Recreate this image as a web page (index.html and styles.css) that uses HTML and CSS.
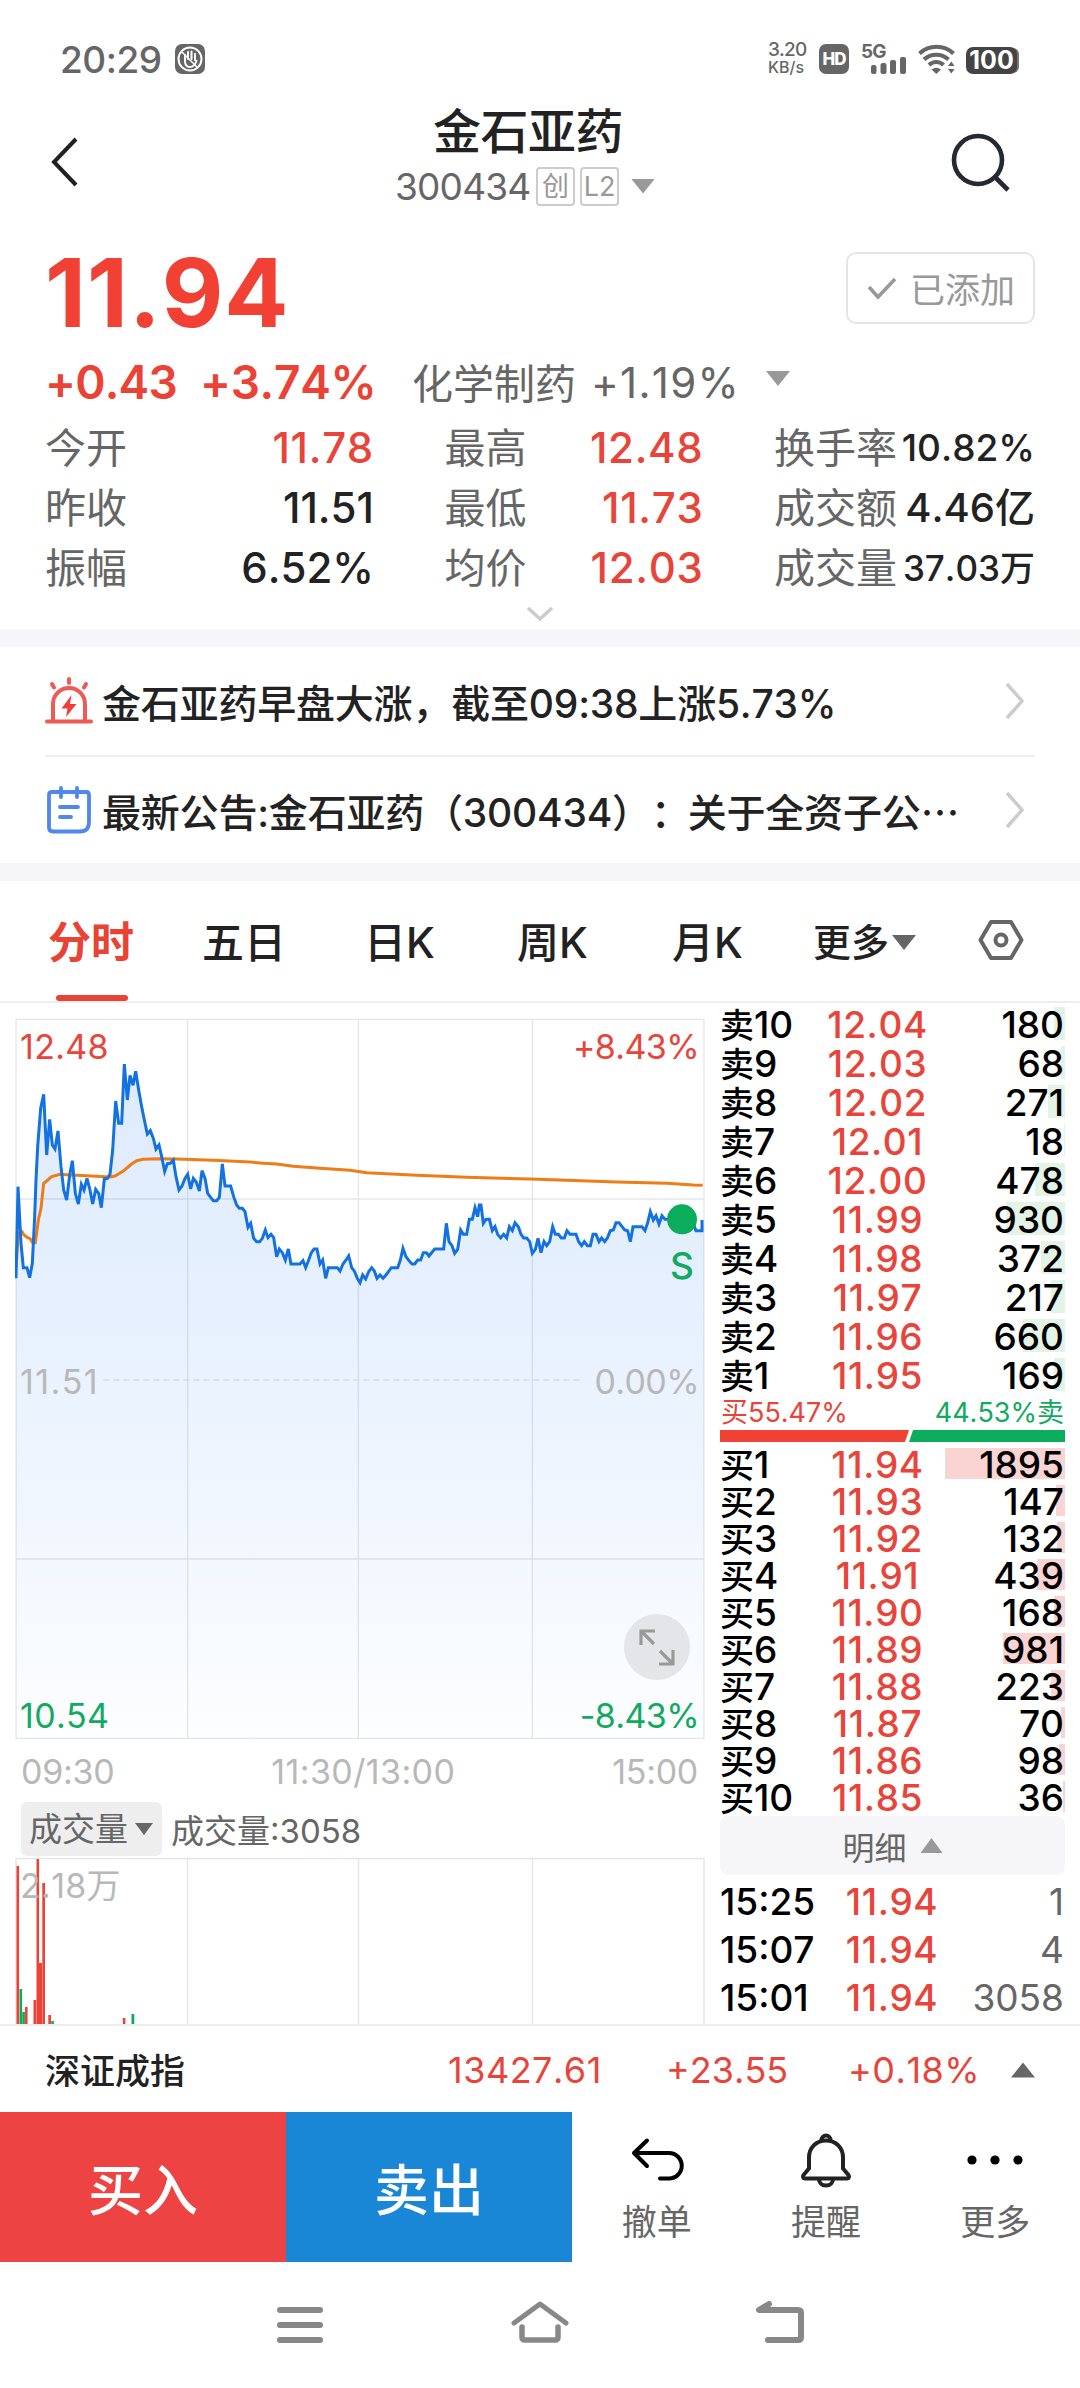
FILE: index.html
```html
<!DOCTYPE html>
<html lang="zh-CN">

<head>
    <meta charset="UTF-8">
    <meta name="viewport" content="width=device-width, initial-scale=1.0">
    <title>金石亚药 300434</title>
    <link rel="stylesheet" href="styles.css">
</head>

<body>
    <!-- 状态栏 -->
    <div class="status">
        <span class="time">20:29</span>
        <svg class="hand" width="32" height="30" viewBox="0 0 32 30">
            <rect x="1" width="30" height="30" rx="7" fill="#666" />
            <circle cx="16" cy="15" r="11.5" fill="none" stroke="#fff" stroke-width="2" />
            <path d="M11 18V11M14 15V8M17.500 15V7.500M21 16V10M11 17c0 4 2 6 5 6 3.500 0 5-2 6.500-6" fill="none" stroke="#fff" stroke-width="2" stroke-linecap="round" />
            <path d="M8 8l15 15" stroke="#fff" stroke-width="1.500" />
        </svg>
        <div class="speed"><span class="num">3.20</span><span class="unit">KB/s</span></div>
        <span class="hd">HD</span>
        <div class="signal">
            <span>5G</span>
            <svg width="46" height="30" viewBox="0 0 46 30">
                <g fill="#666">
                    <rect x="10" y="21" width="5.500" height="9" rx="2" />
                    <rect x="19.500" y="19" width="6" height="11" rx="2" />
                    <rect x="29" y="16" width="6" height="14" rx="2" />
                    <rect x="39" y="13" width="6" height="17" rx="2" />
                </g>
            </svg>
        </div>
        <svg class="wifi" width="38" height="30" viewBox="0 0 38 30">
            <g fill="none" stroke="#666" stroke-width="4">
                <path d="M1.500 9.500C11 .500 26 .500 35.500 9.500" />
                <path d="M6 15.500c7-6.500 17.500-6.500 24.500 0" />
                <path d="M11 21c4-4 10.500-4 14.500 0" />
            </g>
            <path d="M13.500 25.500q4.800-3.500 9.500 0L18.300 30zM30 22l3.300-4.500 3.300 4.500zM30 25l3.300 4.500 3.300-4.500z" fill="#666" />
        </svg>
        <span class="battery">100</span>
    </div>

    <!-- 标题 -->
    <div class="header">
        <svg class="back" width="30" height="52" viewBox="0 0 30 52">
            <path d="M26 3L4 26l22 23" fill="none" stroke="#222" stroke-width="4" />
        </svg>
        <div class="title">
            <h1>金石亚药</h1>
            <div class="code">
                <span class="code-num">300434</span>
                <span class="tag">创</span>
                <span class="tag">L2</span>
                <i class="down"></i>
            </div>
        </div>
        <svg class="search" width="62" height="62" viewBox="0 0 62 62">
            <circle cx="28" cy="28" r="24" fill="none" stroke="#262833" stroke-width="4.600" />
            <path d="M45 45l13 13" stroke="#262833" stroke-width="4.600" />
        </svg>
    </div>

    <!-- 报价 -->
    <div class="quote">
        <div class="price-row">
            <span class="price">11.94</span>
            <div class="added">
                <svg width="30" height="24" viewBox="0 0 30 24">
                    <path d="M2 11l9 10L28 3" fill="none" stroke="#999" stroke-width="3.600" />
                </svg>
                <span>已添加</span>
            </div>
        </div>
        <div class="change-row">
            <span class="chg">+0.43</span>
            <span class="pct">+3.74%</span>
            <span class="industry">化学制药</span>
            <span class="ind-pct">+1.19%</span>
            <i class="down"></i>
        </div>
        <div class="stats">
            <div><span>今开</span><b class="red">11.78</b></div>
            <div><span>最高</span><b class="red">12.48</b></div>
            <div><span>换手率</span><b class="small">10.82%</b></div>
            <div><span>昨收</span><b>11.51</b></div>
            <div><span>最低</span><b class="red">11.73</b></div>
            <div><span>成交额</span><b class="mid">4.46亿</b></div>
            <div><span>振幅</span><b>6.52%</b></div>
            <div><span>均价</span><b class="red">12.03</b></div>
            <div><span>成交量</span><b class="tiny">37.03万</b></div>
        </div>
        <div class="unfold">
            <svg width="28" height="16" viewBox="0 0 28 16">
                <path d="M2 2l12 11L26 2" fill="none" stroke="#ccc" stroke-width="3.500" />
            </svg>
        </div>
    </div>

    <!-- 资讯 -->
    <div class="news">
        <div class="news-item">
            <svg width="48" height="48" viewBox="0 0 48 48">
                <g fill="none" stroke="#f05a55" stroke-width="4" stroke-linecap="round">
                    <path d="M8 43V27a16 16 0 0 1 32 0v16M2 44.500h44M24 2v4M7 7l2 3.500M41 7l-2 3.500" />
                </g>
                <path d="M26.500 18L16.500 31.500h6L21 40l10.500-13h-6.500z" fill="#ee4038" />
            </svg>
            <p>金石亚药早盘大涨，截至09:38上涨5.73%</p>
            <svg class="arrow" width="20" height="38" viewBox="0 0 20 38">
                <path d="M2 2l15 17L2 36" fill="none" stroke="#ccc" stroke-width="3.500" />
            </svg>
        </div>
        <div class="news-item">
            <svg width="48" height="48" viewBox="0 0 48 48">
                <g fill="none" stroke="#4f87ec" stroke-width="3.800" stroke-linecap="round">
                    <path d="M7 6h34q3 0 3 3v27q0 9.500-9 9.500H8q-4 0-4-4V9q0-3 3-3zM16 2v9M32 2v9M15 21h18M15 31h11" stroke-linejoin="round" />
                </g>
            </svg>
            <p>最新公告:金石亚药（300434）<span class="colon">：</span>关于全资子公⋯</p>
            <svg class="arrow" width="20" height="38" viewBox="0 0 20 38">
                <path d="M2 2l15 17L2 36" fill="none" stroke="#ccc" stroke-width="3.500" />
            </svg>
        </div>
    </div>

    <!-- K线切换 -->
    <ul class="tabs">
        <li class="active">分时</li>
        <li>五日</li>
        <li>日K</li>
        <li>周K</li>
        <li>月K</li>
        <li class="more">更多<i class="down dark"></i></li>
        <li class="set">
            <svg width="46" height="42" viewBox="0 0 46 42">
                <path d="M13 3h20l10.500 18L33 39H13L2.500 21z" fill="none" stroke="#666" stroke-width="4" stroke-linejoin="round" />
                <circle cx="23" cy="21" r="5.500" fill="none" stroke="#666" stroke-width="4" />
            </svg>
        </li>
    </ul>

    <div class="main">
        <div class="left">
            <!-- 分时图 -->
            <div class="chart">
                <svg width="690" height="722" viewBox="45 54 2070 2166">
                    <defs>
                        <linearGradient id="area" gradientUnits="userSpaceOnUse" x1="0" y1="200" x2="0" y2="2214">
                            <stop offset="0" stop-color="#1472f6" stop-opacity=".14" />
                            <stop offset=".4" stop-color="#1472f6" stop-opacity=".1" />
                            <stop offset="1" stop-color="#1472f6" stop-opacity="0.01" />
                        </linearGradient>
                    </defs>
                    <path class="grid" d="M48 58H2112V2215H48zM563 58V2215M1075 58V2215M1597 58V2215M48 597H2112M48 1677H2112" />
                    <path class="zero" d="M310 1140H1740" />
                    <polygon fill="url(#area)" points="48,835 54,560 63,730 70,803 81,803 89,833 97,790 104,650 108,540 113,440 122,325 131,283 140,465 149,358 157,435 165,447 174,393 183,500 191,570 200,600 209,525 217,482 226,580 235,612 244,553 252,570 261,535 270,570 278,612 287,568 296,580 304,623 313,537 322,535 330,523 338,450 347,303 356,370 365,370 373,192 382,300 390,226 399,256 407,214 416,270 425,320 433,360 442,402 451,392 460,415 468,447 477,435 485,470 494,514 502,491 511,490 520,480 528,530 537,570 546,558 555,535 563,523 572,567 580,535 589,547 598,573 606,512 615,535 623,580 632,592 640,602 650,602 658,592 667,492 675,558 692,558 701,590 710,615 718,625 727,625 735,635 744,682 752,670 761,715 770,725 779,725 787,715 796,690 804,713 813,703 821,713 830,770 838,747 847,758 856,780 865,747 873,792 900,792 917,803 934,758 942,747 951,747 960,792 968,780 977,835 985,803 1012,803 1020,813 1029,792 1046,768 1055,803 1063,813 1072,835 1080,848 1115,803 1131,835 1174,803 1193,803 1209,745 1218,770 1236,792 1262,780 1270,758 1304,747 1331,747 1339,670 1347,725 1364,760 1373,748 1382,690 1400,703 1408,658 1425,623 1441,613 1450,670 1468,658 1477,692 1502,714 1520,714 1528,680 1545,668 1563,703 1580,714 1597,760 1614,715 1623,758 1649,725 1658,680 1666,703 1693,714 1701,692 1728,703 1745,737 1771,737 1779,703 1797,725 1814,725 1831,692 1848,668 1857,668 1883,692 1891,725 1899,680 1926,680 1935,692 1951,635 1968,655 1995,658 2046,660 2088,692 2106,692 2112,660 2112,2215 48,2215" />
                    <polyline class="avg" points="48,800 55,700 66,695 72,705 80,711 90,716 98,728 106,728 115,660 123,625 131,550 140,543 155,530 180,523 200,524 260,527 330,531 345,528 370,513 395,492 410,482 430,478 480,476 530,477 640,481 750,486 790,490 830,492 880,499 960,505 1050,511 1100,518 1250,526 1400,532 1590,537 1700,541 1850,546 2000,550 2080,555 2108,556" />
                    <polyline class="line" points="48,835 54,560 63,730 70,803 81,803 89,833 97,790 104,650 108,540 113,440 122,325 131,283 140,465 149,358 157,435 165,447 174,393 183,500 191,570 200,600 209,525 217,482 226,580 235,612 244,553 252,570 261,535 270,570 278,612 287,568 296,580 304,623 313,537 322,535 330,523 338,450 347,303 356,370 365,370 373,192 382,300 390,226 399,256 407,214 416,270 425,320 433,360 442,402 451,392 460,415 468,447 477,435 485,470 494,514 502,491 511,490 520,480 528,530 537,570 546,558 555,535 563,523 572,567 580,535 589,547 598,573 606,512 615,535 623,580 632,592 640,602 650,602 658,592 667,492 675,558 692,558 701,590 710,615 718,625 727,625 735,635 744,682 752,670 761,715 770,725 779,725 787,715 796,690 804,713 813,703 821,713 830,770 838,747 847,758 856,780 865,747 873,792 900,792 909,782 917,803 926,780 934,758 942,747 951,747 960,792 968,780 977,835 985,803 1012,803 1020,813 1029,792 1038,780 1046,768 1055,803 1063,813 1072,835 1080,848 1088,825 1097,837 1106,815 1115,803 1123,813 1131,835 1140,825 1149,835 1158,825 1174,803 1193,803 1201,780 1209,745 1218,770 1227,782 1236,792 1244,792 1253,780 1262,780 1270,758 1279,758 1287,768 1304,747 1331,747 1339,670 1347,725 1356,737 1364,760 1373,748 1382,690 1390,703 1400,703 1408,658 1417,658 1425,623 1433,650 1438,615 1443,615 1450,670 1458,658 1468,658 1477,692 1485,680 1493,703 1502,714 1511,703 1520,714 1528,680 1537,692 1545,668 1555,680 1563,703 1571,714 1580,714 1589,725 1597,760 1606,748 1614,715 1623,758 1632,725 1640,737 1649,725 1658,680 1666,703 1675,703 1684,714 1693,714 1701,692 1710,703 1728,703 1736,725 1745,737 1753,725 1762,737 1771,737 1779,703 1788,703 1797,725 1805,714 1814,725 1822,714 1831,692 1840,690 1848,668 1857,668 1874,690 1883,692 1891,725 1899,680 1926,680 1935,692 1943,668 1951,635 1960,660 1968,647 1977,672 1986,647 1995,658 2075,658 2088,692 2106,692 2106,660" />
                    <circle cx="2046" cy="658" r="45" fill="#0bac5c" />
                </svg>
                <span class="mark lt red">12.48</span>
                <span class="mark rt red">+8.43%</span>
                <span class="mark lm">11.51</span>
                <span class="mark rm">0.00%</span>
                <span class="mark lb green">10.54</span>
                <span class="mark rb green">-8.43%</span>
                <span class="sell-flag">S</span>
                <div class="full">
                    <svg width="66" height="66" viewBox="0 0 66 66">
                        <path d="M17 31V17h14M17 17l13 13M49 36v14H35M49 50L36 37" fill="none" stroke="#999" stroke-width="3.200" />
                    </svg>
                </div>
            </div>
            <div class="axis"><span>09:30</span><span class="noon">11:30/13:00</span><span>15:00</span></div>
            <!-- 成交量 -->
            <div class="vol-head">
                <div class="vol-select">成交量<i class="down dark sm"></i></div>
                <span>成交量:3058</span>
            </div>
            <div class="vol">
                <svg width="690" height="167" viewBox="15 1857 690 167">
                    <path class="vgrid" d="M16 2030V1858.500H704V2030M187.500 1858V2030M358.500 1858V2030M532.500 1858V2030" />
                    <g fill="#eb4337">
                        <rect x="16.500" y="1866" width="2.600" height="158" />
                        <rect x="25" y="2007" width="2.600" height="17" />
                        <rect x="33.500" y="2000" width="2.800" height="24" />
                        <rect x="36.500" y="1859" width="2.600" height="165" />
                        <rect x="39" y="1963" width="3" height="61" />
                        <rect x="42.300" y="1883" width="2.700" height="141" />
                        <rect x="48.300" y="2015" width="2.700" height="9" />
                        <rect x="122.800" y="2018" width="2.600" height="6" />
                    </g>
                    <g fill="#12a960">
                        <rect x="19.500" y="1989" width="2.600" height="35" />
                        <rect x="22.300" y="2012" width="2.600" height="12" />
                        <rect x="51.300" y="2021" width="2.600" height="3" />
                        <rect x="131.500" y="2014" width="2.800" height="10" />
                    </g>
                </svg>
                <span class="mark vt">2.18万</span>
            </div>
        </div>

        <!-- 十档盘口 -->
        <div class="book">
            <ul class="sell">
                <li><span><i>卖</i>10</span><b>12.04</b><em>180</em><u style="width: 11px"></u></li>
                <li><span><i>卖</i>9</span><b>12.03</b><em>68</em><u style="width: 4px"></u></li>
                <li><span><i>卖</i>8</span><b>12.02</b><em>271</em><u style="width: 17px"></u></li>
                <li><span><i>卖</i>7</span><b>12.01</b><em>18</em><u style="width: 1px"></u></li>
                <li><span><i>卖</i>6</span><b>12.00</b><em>478</em><u style="width: 30px"></u></li>
                <li><span><i>卖</i>5</span><b>11.99</b><em>930</em><u style="width: 59px"></u></li>
                <li><span><i>卖</i>4</span><b>11.98</b><em>372</em><u style="width: 24px"></u></li>
                <li><span><i>卖</i>3</span><b>11.97</b><em>217</em><u style="width: 14px"></u></li>
                <li><span><i>卖</i>2</span><b>11.96</b><em>660</em><u style="width: 42px"></u></li>
                <li><span><i>卖</i>1</span><b>11.95</b><em>169</em><u style="width: 11px"></u></li>
            </ul>
            <div class="ratio"><span class="red">买55.47%</span><span class="green">44.53%卖</span></div>
            <svg class="ratio-bar" width="345" height="12" viewBox="0 0 345 12">
                <path d="M0 0h189l-4 12H0z" fill="#f04134" />
                <path d="M193 0h152v12H189z" fill="#0bac5c" />
            </svg>
            <ul class="buy">
                <li><span><i>买</i>1</span><b>11.94</b><em>1895</em><u style="width: 120px"></u></li>
                <li><span><i>买</i>2</span><b>11.93</b><em>147</em><u style="width: 9px"></u></li>
                <li><span><i>买</i>3</span><b>11.92</b><em>132</em><u style="width: 8px"></u></li>
                <li><span><i>买</i>4</span><b>11.91</b><em>439</em><u style="width: 28px"></u></li>
                <li><span><i>买</i>5</span><b>11.90</b><em>168</em><u style="width: 11px"></u></li>
                <li><span><i>买</i>6</span><b>11.89</b><em>981</em><u style="width: 62px"></u></li>
                <li><span><i>买</i>7</span><b>11.88</b><em>223</em><u style="width: 14px"></u></li>
                <li><span><i>买</i>8</span><b>11.87</b><em>70</em><u style="width: 4px"></u></li>
                <li><span><i>买</i>9</span><b>11.86</b><em>98</em><u style="width: 6px"></u></li>
                <li><span><i>买</i>10</span><b>11.85</b><em>36</em><u style="width: 2px"></u></li>
            </ul>
            <div class="detail">明细<i class="up"></i></div>
            <ul class="trades">
                <li><span>15:25</span><b>11.94</b><em>1</em></li>
                <li><span>15:07</span><b>11.94</b><em>4</em></li>
                <li><span>15:01</span><b>11.94</b><em>3058</em></li>
            </ul>
        </div>
    </div>

    <!-- 指数 -->
    <div class="index-bar">
        <span class="idx-name">深证成指</span>
        <span class="idx-val">13427.61</span>
        <span class="idx-chg">+23.55</span>
        <span class="idx-pct">+0.18%</span>
        <i class="up dark"></i>
    </div>

    <!-- 底部操作 -->
    <div class="actions">
        <a class="btn btn-buy">买入</a>
        <a class="btn btn-sell">卖出</a>
        <a class="tool">
            <svg width="56" height="56" viewBox="0 0 56 56">
                <path d="M18 8.500L5 21l13 13M5 21h35a12.500 12.500 0 0 1 0 25.500H31" fill="none" stroke="#000" stroke-width="4" stroke-linecap="round" stroke-linejoin="round" />
            </svg>
            <span>撤单</span>
        </a>
        <a class="tool">
            <svg width="56" height="56" viewBox="0 0 56 56">
                <g fill="none" stroke="#222" stroke-width="4" stroke-linejoin="round">
                    <path d="M28 8.500c-10 0-17 7.500-17 17v11L5.500 43c-1 1.500-.500 3.500 1.500 3.500h42c2 0 2.500-2 1.500-3.500L45 36.500v-11c0-9.500-7-17-17-17z" />
                    <path d="M23.500 8a4.500 4.500 0 0 1 9 0M21 47c0 4 3 6.500 7 6.500s7-2.500 7-6.500" />
                </g>
            </svg>
            <span>提醒</span>
        </a>
        <a class="tool">
            <svg width="56" height="56" viewBox="0 0 56 56">
                <circle cx="5" cy="28" r="4.600" />
                <circle cx="28" cy="28" r="4.600" />
                <circle cx="51" cy="28" r="4.600" />
            </svg>
            <span>更多</span>
        </a>
    </div>

    <!-- 系统导航 -->
    <div class="nav">
        <svg width="60" height="48" viewBox="0 0 60 48">
            <path d="M10 9h40M10 24h40M10 39h40" stroke="#888" stroke-width="6" stroke-linecap="round" />
        </svg>
        <svg width="60" height="48" viewBox="0 0 60 48">
            <g fill="none" stroke="#888" stroke-width="6" stroke-linecap="round" stroke-linejoin="round">
                <path d="M4 22L30 3l26 19" stroke-width="5" />
                <path d="M12 26v10q0 3 3 3h30q3 0 3-3V26" stroke-width="5.500" />
            </g>
        </svg>
        <svg width="60" height="48" viewBox="0 0 60 48">
            <path d="M19 3L9 9h39q3 0 3 3v24q0 3-3 3H18" fill="none" stroke="#888" stroke-width="6" stroke-linecap="round" stroke-linejoin="round" />
        </svg>
    </div>
</body>

</html>
```
FILE: styles.css
```css
* {
    margin: 0;
    padding: 0;
    box-sizing: border-box;
}

body {
    width: 1080px;
    height: 2388px;
    overflow: hidden;
    background: #fff;
    color: #222;
    font-family: Inter, "Noto Sans CJK SC", sans-serif;
    font-kerning: none;
    text-spacing-trim: space-all;
}

ul {
    list-style: none;
}

i,
em {
    font-style: normal;
}

b {
    font-weight: 500;
}

u {
    text-decoration: none;
}

svg {
    display: block;
    flex: none;
}

.red {
    color: #e8443a;
}

.green {
    color: #12a960;
}

/* 三角 */
.down,
.up {
    display: block;
    width: 24px;
    height: 15px;
    background: #999;
    clip-path: polygon(0 0, 100% 0, 50% 100%);
}

.up {
    background: #999;
    clip-path: polygon(50% 0, 100% 100%, 0 100%);
}

.dark {
    background: #666;
}

.sm {
    width: 18px;
    height: 12px;
}

/* 状态栏 */
.status {
    display: flex;
    align-items: center;
    height: 88px;
    padding: 30px 63px 0 60px;
    color: #666;
}

.time {
    width: 114px;
    font-size: 37px;
    font-weight: 500;
    letter-spacing: -.5px;
}

.speed {
    display: flex;
    flex-direction: column;
    width: 51px;
    margin-left: auto;
    font-weight: 500;
}

.speed .num {
    font-size: 19px;
    line-height: 16px;
    letter-spacing: -.8px;
}

.speed .unit {
    font-size: 16px;
    line-height: 18px;
}

.hd {
    width: 30px;
    height: 30px;
    margin-right: 12px;
    border-radius: 7px;
    background: #666;
    color: #fff;
    font-size: 17px;
    font-weight: 800;
    line-height: 30px;
    text-align: center;
    letter-spacing: -1px;
}

.signal {
    position: relative;
    width: 46px;
    height: 30px;
    margin-right: 11px;
}

.signal span {
    position: absolute;
    top: 0;
    left: 0;
    font-size: 19px;
    font-weight: 700;
    line-height: 15px;
    letter-spacing: -1px;
}

.wifi {
    margin-right: 10px;
}

.battery {
    width: 51px;
    height: 27px;
    margin-top: 3px;
    border-radius: 7px;
    background: #444;
    box-shadow: 3px 0 0 -1px #777;
    color: #fff;
    font-size: 25px;
    font-weight: 700;
    line-height: 27px;
    text-align: center;
}

/* 标题 */
.header {
    display: grid;
    grid-template-columns: 345px 266px 1fr;
    height: 152px;
    padding-left: 50px;
}

.back {
    margin-top: 48px;
}

.title {
    padding-top: 14px;
}

.title h1 {
    font-size: 48px;
    font-weight: 500;
    line-height: 60px;
    text-align: center;
    letter-spacing: -.5px;
}

.code {
    display: flex;
    align-items: center;
    height: 40px;
    margin-top: 4px;
    color: #666;
}

.code-num {
    width: 141px;
    font-size: 37px;
    letter-spacing: -.8px;
}

.tag {
    width: 39px;
    height: 39px;
    margin-right: 5px;
    border: 2px solid #ccc;
    border-radius: 4px;
    color: #999;
    font-size: 27px;
    line-height: 35px;
    text-align: center;
}

.code .down {
    margin-left: 7px;
}

.search {
    margin: 44px 0 0 289px;
}

/* 报价 */
.quote {
    height: 389px;
    padding: 0 45px;
}

.price-row {
    display: flex;
    justify-content: space-between;
    height: 102px;
}

.price {
    color: #f04134;
    font-size: 95px;
    font-weight: 700;
    line-height: 106px;
    letter-spacing: 1px;
}

.added {
    display: flex;
    align-items: center;
    width: 189px;
    height: 72px;
    margin-top: 12px;
    padding-left: 19px;
    border: 2px solid #e5e5e5;
    border-radius: 10px;
    color: #999;
    font-size: 35px;
}

.added span {
    margin: -2px 0 0 13px;
}

.change-row {
    display: flex;
    align-items: center;
    height: 75px;
    padding-top: 5px;
    color: #666;
    font-size: 42px;
}

.chg,
.pct {
    width: 155px;
    color: #ea4335;
    font-size: 46px;
    font-weight: 600;
    letter-spacing: -.8px;
}

.pct {
    width: 212px;
    letter-spacing: -.3px;
}

.industry {
    width: 179px;
    margin-top: -3px;
    font-size: 41px;
}

.ind-pct {
    width: 175px;
    letter-spacing: 1.3px;
}

.change-row .down {
    margin-top: -7px;
}

.stats {
    display: grid;
    grid-template-columns: 329px 259px 261px;
    justify-content: space-between;
    padding-top: 1px;
}

.stats div {
    display: flex;
    justify-content: space-between;
    height: 60px;
    line-height: 60px;
    font-size: 42px;
    white-space: nowrap;
}

.stats span {
    color: #666;
    font-size: 41px;
}

.stats .red {
    letter-spacing: .7px;
}

.stats .mid {
    font-size: 40px;
}

.stats .small {
    font-size: 37px;
}

.stats .tiny {
    font-size: 35px;
}

.unfold {
    display: flex;
    align-items: center;
    justify-content: center;
    height: 32px;
}

/* 资讯 */
.news {
    height: 252px;
    padding: 0 45px;
    border-top: 18px solid #f6f6f9;
    border-bottom: 18px solid #f6f6f9;
}

.news-item {
    display: flex;
    align-items: center;
    height: 108px;
}

.news-item+.news-item {
    border-top: 2px solid #eee;
}

.news-item p {
    flex: 1;
    margin: -1px 0 0 9px;
    font-size: 39px;
    white-space: nowrap;
    font-weight: 500;
    letter-spacing: -.2px;
}

/* 冒号居中 */
.colon {
    margin-right: -2px;
    font-family: "Noto Sans CJK TC", sans-serif;
}

.news-item .arrow {
    margin-right: 10px;
}

/* K线切换 */
.tabs {
    display: grid;
    grid-template-columns: 154px 162px 153px 155px 141px 165px auto;
    height: 122px;
    padding-left: 48px;
    border-bottom: 2px solid #eee;
    font-size: 42px;
    font-weight: 500;
    line-height: 123px;
}

.tabs .active {
    position: relative;
    color: #e84335;
    font-size: 43px;
    font-weight: 700;
}

.tabs .active::after {
    content: "";
    position: absolute;
    left: 8px;
    bottom: 3px;
    width: 72px;
    height: 6px;
    border-radius: 3px;
    background: #e84335;
}

.more {
    display: flex;
    align-items: center;
    font-size: 38px;
}

.more .down {
    margin-left: 3px;
}

.set {
    padding-top: 38px;
}

/* 图表 */
.main {
    display: flex;
    height: 1021px;
    overflow: hidden;
}

.left {
    width: 720px;
    padding: 15px 15px 0 15px;
}

.chart,
.vol {
    position: relative;
}

.grid,
.zero {
    fill: none;
    stroke: #e4e6ea;
    stroke-width: 4;
}

.zero {
    stroke-dasharray: 18 12;
}

.vgrid {
    fill: none;
    stroke: #e6e6e6;
    stroke-width: 1.500;
}

.line {
    fill: none;
    stroke: #1472e0;
    stroke-width: 9;
}

.avg {
    fill: none;
    stroke: #ee7d18;
    stroke-width: 9;
}

.mark {
    position: absolute;
    font-size: 34px;
    line-height: 40px;
}

.lm,
.rm,
.vt {
    color: #b8b8b8;
}

.lt,
.lm,
.lb,
.vt {
    left: 5px;
    letter-spacing: .3px;
}

.lm {
    letter-spacing: 1.4px;
}

.rt,
.rm,
.rb {
    right: 6px;
    letter-spacing: -.6px;
}

.lt,
.rt {
    top: 9px;
}

.lm,
.rm {
    top: 344px;
}

.lb,
.rb {
    top: 678px;
}

.vt {
    top: 9px;
}

.sell-flag {
    position: absolute;
    top: 226px;
    right: 11px;
    color: #12a960;
    font-size: 37px;
    font-weight: 500;
    line-height: 44px;
}

.full {
    position: absolute;
    top: 596px;
    right: 15px;
    border-radius: 50%;
    background: rgba(190, 190, 190, .35);
}

.axis {
    display: flex;
    justify-content: space-between;
    height: 62px;
    padding: 0 7px 0 6px;
    color: #b8b8b8;
    font-size: 34px;
    line-height: 63px;
    letter-spacing: -.3px;
}

.noon {
    letter-spacing: .4px;
}

.vol-head {
    display: flex;
    height: 55px;
    padding-left: 6px;
    color: #666;
    font-size: 33px;
    line-height: 59px;
}

.vol-select {
    display: flex;
    align-items: center;
    width: 141px;
    height: 54px;
    margin-right: 9px;
    padding-left: 8px;
    border-radius: 6px;
    background: #eee;
}

.vol-select .down {
    margin-left: 7px;
}

/* 盘口 */
.book {
    width: 345px;
    padding-top: 2px;
    color: #000;
    font-size: 37px;
    font-weight: 500;
}

.book li {
    position: relative;
    display: grid;
    grid-template-columns: 106px 103px 1fr;
    height: 39px;
    line-height: 39px;
}

.book li i {
    font-size: 34px;
}

.book li span {
    white-space: nowrap;
}

.book li b {
    color: #e8443a;
    letter-spacing: .6px;
    text-align: center;
}

.book li em {
    position: relative;
    z-index: 1;
    padding-right: 1px;
    text-align: right;
}

.book li u {
    position: absolute;
    top: 2px;
    right: 0;
    height: 33px;
    background: #e3f3e6;
}

.book .buy li {
    height: 37px;
    line-height: 37px;
}

.book .buy li u {
    height: 31px;
    background: #fad3d3;
}

.ratio {
    display: flex;
    justify-content: space-between;
    height: 35px;
    padding: 0 1px;
    font-size: 27px;
    font-weight: 400;
    line-height: 35px;
}

.ratio-bar {
    margin-bottom: 4px;
}

.detail {
    display: flex;
    align-items: center;
    justify-content: center;
    height: 59px;
    border-radius: 8px;
    background: #f6f6f9;
    color: #666;
    font-size: 32px;
    font-weight: 400;
}

.detail .up {
    width: 22px;
    margin-left: 14px;
}

.trades {
    padding-top: 3px;
}

.book .trades li {
    grid-template-columns: 120px 104px 1fr;
    height: 48px;
    line-height: 48px;
}

.book .trades em {
    color: #666;
    font-weight: 400;
}

/* 指数 */
.index-bar {
    display: grid;
    grid-template-columns: 403px 218px 182px 163px 24px;
    align-items: center;
    height: 88px;
    padding: 2px 45px 0 45px;
    border-top: 2px solid #eee;
    color: #e8443a;
    font-size: 36px;
}

.idx-name {
    margin-top: -4px;
    color: #222;
    font-size: 35px;
    font-weight: 500;
}

.idx-val,
.idx-pct {
    letter-spacing: .5px;
}

/* 底部操作 */
.actions {
    display: flex;
    height: 150px;
}

.btn {
    width: 286px;
    padding-top: 3px;
    color: #fff;
    font-size: 55px;
    font-weight: 500;
    line-height: 150px;
    text-align: center;
}

.btn-buy {
    background: #ee4343;
}

.btn-sell {
    background: #1986d6;
}

.tool {
    flex: 1;
    display: flex;
    flex-direction: column;
    align-items: center;
    padding-top: 20px;
    color: #666;
    font-size: 35px;
    line-height: 50px;
}

.tool span {
    margin-top: 9px;
}

/* 系统导航 */
.nav {
    display: flex;
    justify-content: center;
    gap: 180px;
    padding-top: 39px;
}
```
